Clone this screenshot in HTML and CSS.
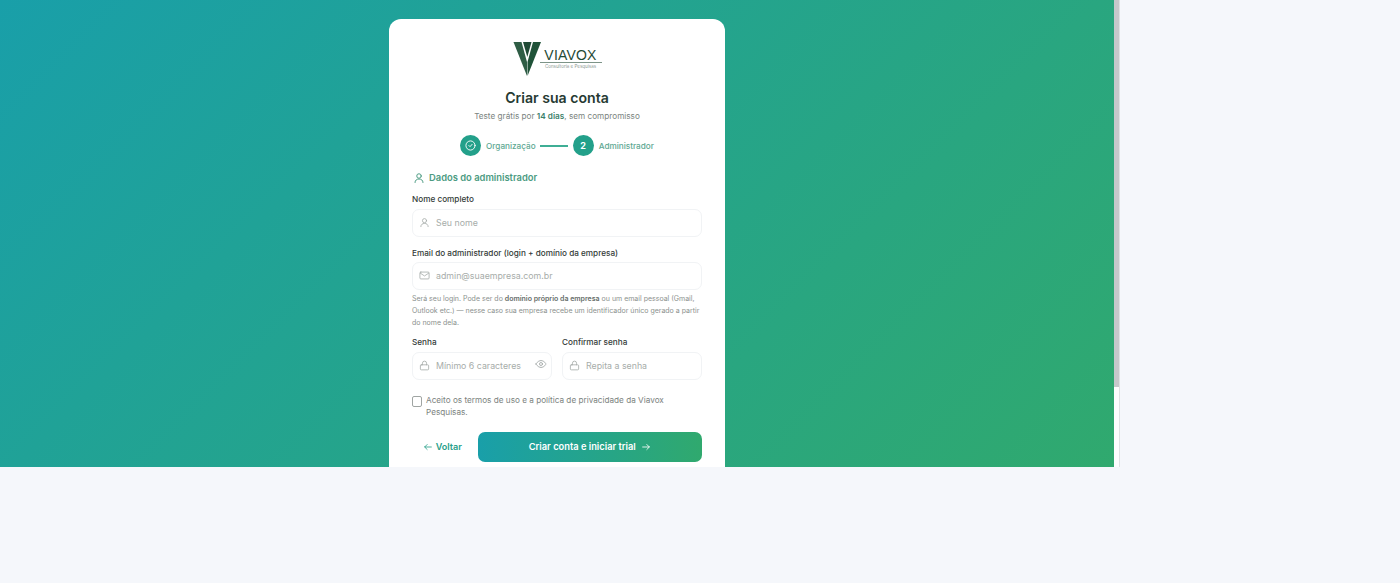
FILE: index.html
```html
<!DOCTYPE html>
<html>
<head>
  <title>Criar sua conta</title>
  <link rel="stylesheet" href="styles.css">
</head>
<body>
<div class="frame">
  <div class="hero">
    <div class="card">
      <div class="logo">
        <svg class="logo-mark" viewBox="0 0 28 34" width="28" height="34">
          <polygon points="0.5,0 8.5,0 14,20 14,34" fill="#2f5d45"/>
          <polygon points="10,0 18.5,0 14.3,15" fill="#1f4a35"/>
          <polygon points="20,0 28,0 14.5,34 14.5,20" fill="#1f5238"/>
        </svg>
        <div class="logo-text">
          <div class="logo-name">VIAVOX</div>
          <div class="logo-sub">Consultoria e Pesquisas</div>
        </div>
      </div>

      <h1>Criar sua conta</h1>
      <p class="sub">Teste grátis por <b>14 dias</b>, sem compromisso</p>

      <div class="steps">
        <span class="step-dot">
          <svg viewBox="0 0 24 24" width="11" height="11" class="ic"><circle cx="12" cy="12" r="10"/><path d="M8.5 12l2.5 2.5 4.5-5"/></svg>
        </span>
        <span class="step-name">Organização</span>
        <span class="step-line"></span>
        <span class="step-dot">2</span>
        <span class="step-name">Administrador</span>
      </div>

      <div class="section">
        <svg viewBox="0 0 24 24" width="12" height="12" class="ic"><circle cx="12" cy="8" r="4.5"/><path d="M4 21c0-4.5 3.5-7 8-7s8 2.5 8 7"/></svg>
        Dados do administrador
      </div>

      <label class="label label-first">Nome completo</label>
      <div class="input input-top">
        <svg viewBox="0 0 24 24" width="11" height="11" class="ic"><circle cx="12" cy="8" r="4.5"/><path d="M4 21c0-4.5 3.5-7 8-7s8 2.5 8 7"/></svg>
        <span>Seu nome</span>
      </div>

      <label class="label">Email do administrador (login + domínio da empresa)</label>
      <div class="input input-top">
        <svg viewBox="0 0 24 24" width="11" height="11" class="ic"><rect x="2" y="4.5" width="20" height="15" rx="2"/><path d="M3 7l9 6 9-6"/></svg>
        <span>admin@suaempresa.com.br</span>
      </div>
      <p class="help">Será seu login. Pode ser do <b>domínio próprio da empresa</b> ou um email pessoal (Gmail, Outlook etc.) — nesse caso sua empresa recebe um identificador único gerado a partir do nome dela.</p>

      <div class="pass-row">
        <div class="pass-col">
          <label class="label">Senha</label>
          <div class="input">
            <svg viewBox="0 0 24 24" width="11" height="11" class="ic"><rect x="3" y="10.5" width="18" height="11" rx="2"/><path d="M7.5 10.5V7a4.5 4.5 0 0 1 9 0v3.5"/></svg>
            <span>Mínimo 6 caracteres</span>
            <svg viewBox="0 0 24 24" width="12" height="12" class="ic eye"><path d="M2 12s3.5-7 10-7 10 7 10 7-3.5 7-10 7-10-7-10-7z"/><circle cx="12" cy="12" r="3"/></svg>
          </div>
        </div>
        <div class="pass-col">
          <label class="label">Confirmar senha</label>
          <div class="input">
            <svg viewBox="0 0 24 24" width="11" height="11" class="ic"><rect x="3" y="10.5" width="18" height="11" rx="2"/><path d="M7.5 10.5V7a4.5 4.5 0 0 1 9 0v3.5"/></svg>
            <span>Repita a senha</span>
          </div>
        </div>
      </div>

      <div class="terms">
        <span class="check"></span>
        <span>Aceito os termos de uso e a política de privacidade da Viavox Pesquisas.</span>
      </div>

      <div class="actions">
        <a class="back">
          <svg viewBox="0 0 24 24" width="10" height="10" class="ic"><path d="M20 12H4M10 6l-6 6 6 6"/></svg>
          Voltar
        </a>
        <a class="submit">
          Criar conta e iniciar trial
          <svg viewBox="0 0 24 24" width="10" height="10" class="ic"><path d="M4 12h16M14 6l6 6-6 6"/></svg>
        </a>
      </div>
    </div>
  </div>
  <div class="scrollbar"><div class="thumb"></div></div>
</div>
</body>
</html>
```

FILE: styles.css
```css
html, body {
  margin: 0;
  height: 100%;
}

body {
  background: #f5f7fb;
  font-family: "Inter", "Liberation Sans", sans-serif;
  color: #2d3b36;
  overflow: hidden;
}

.frame {
  display: flex;
  width: 1120px;
  height: 467px;
}

.hero {
  width: 1114px;
  height: 467px;
  overflow: hidden;
  background: linear-gradient(135deg, #199fa9 0%, #30a96e 100%);
}

.scrollbar {
  width: 6px;
  background: #fdfdfe;
  border-right: 1px solid #dfe1e4;
  box-sizing: border-box;
}

.thumb {
  height: 387px;
  background: #c6c8cb;
}

.card {
  width: 336px;
  height: 480px;
  box-sizing: border-box;
  margin: 19px 0 0 389px;
  padding: 23px 23px 0 23px;
  background: #fff;
  border-radius: 12px;
}

.logo {
  display: flex;
  justify-content: center;
  align-items: flex-start;
  height: 34px;
}

.logo-text {
  width: 62px;
  margin-left: -1px;
  margin-top: 7px;
  text-align: center;
}

.logo-name {
  font-family: "Liberation Sans", sans-serif;
  font-size: 14px;
  line-height: 13px;
  letter-spacing: 0.2px;
  color: #1f4a35;
  border-bottom: 1px solid #7d9488;
}

.logo-sub {
  font-size: 4.5px;
  line-height: 8px;
  color: #8c9892;
}

h1 {
  margin: 13px 0 0;
  font-size: 14.1px;
  line-height: 18px;
  font-weight: 600;
  text-align: center;
  color: #263a32;
}

.sub {
  margin: 2.5px 0 0;
  font-size: 8.2px;
  line-height: 13px;
  text-align: center;
  color: #7b8480;
}

.sub b {
  font-weight: 600;
  color: #3c7f6a;
}

.steps {
  display: flex;
  justify-content: center;
  align-items: center;
  margin-top: 12.5px;
  font-size: 8.2px;
  color: #5ea892;
}

.step-dot {
  display: flex;
  align-items: center;
  justify-content: center;
  width: 21px;
  height: 21px;
  border-radius: 50%;
  background: #23a08a;
  color: #fff;
  font-size: 9px;
  font-weight: 700;
}

.step-name {
  margin-left: 5px;
  font-weight: 500;
}

.step-line {
  width: 28px;
  height: 2px;
  margin: 0 5px 0 4px;
  background: #3fae95;
}

.ic {
  flex: none;
  fill: none;
  stroke: currentColor;
  stroke-width: 2;
  stroke-linecap: round;
  stroke-linejoin: round;
}

.section {
  display: flex;
  align-items: center;
  gap: 4.5px;
  margin-top: 15px;
  padding-left: 0.5px;
  font-size: 9.4px;
  line-height: 14px;
  font-weight: 600;
  color: #4c9b82;
}

.section .ic {
  color: #4f9d85;
}

.label {
  display: block;
  margin-top: 9.5px;
  font-size: 8.2px;
  line-height: 12px;
  font-weight: 500;
  color: #333b38;
}

.label-first {
  margin-top: 7.5px;
  padding-bottom: 1px;
}

.input {
  display: flex;
  align-items: center;
  gap: 6px;
  height: 28px;
  box-sizing: border-box;
  margin-top: 3.5px;
  padding: 0 6px;
  border: 1px solid #f1f3f5;
  border-radius: 7px;
  font-size: 8.8px;
  color: #a7adaa;
}

.input-top {
  padding-bottom: 1.5px;
}

.input .ic {
  color: #a6acaa;
  stroke-width: 1.8;
}

.eye {
  margin-left: auto;
  margin-top: -3px;
  margin-right: -2px;
}

.help {
  margin: 3px 0 0;
  font-size: 7px;
  line-height: 12px;
  color: #8b918e;
}

.help b {
  font-weight: 600;
  color: #666d6a;
}

.pass-row {
  display: flex;
  gap: 10px;
  margin-top: 7px;
}

.pass-col {
  flex: 1;
  min-width: 0;
}

.pass-col .label {
  margin-top: 0;
}

.terms {
  display: flex;
  gap: 4px;
  margin-top: 14px;
  font-size: 8.2px;
  line-height: 12px;
  color: #7c8380;
}

.check {
  flex: none;
  width: 8px;
  height: 9px;
  margin-top: 2px;
  border: 1px solid #a0a5a3;
  border-radius: 2px;
}

.actions {
  display: flex;
  align-items: center;
  margin-top: 14px;
}

.back {
  display: flex;
  align-items: center;
  justify-content: center;
  gap: 3px;
  width: 60.5px;
  margin-right: 5px;
  font-size: 9.1px;
  font-weight: 600;
  color: #2aa08a;
}

.submit {
  flex: 1;
  display: flex;
  align-items: center;
  justify-content: center;
  gap: 5px;
  height: 30px;
  border-radius: 7px;
  background: linear-gradient(90deg, #199fa9, #30a96e);
  color: #fff;
  font-size: 9.3px;
  font-weight: 600;
}
```
